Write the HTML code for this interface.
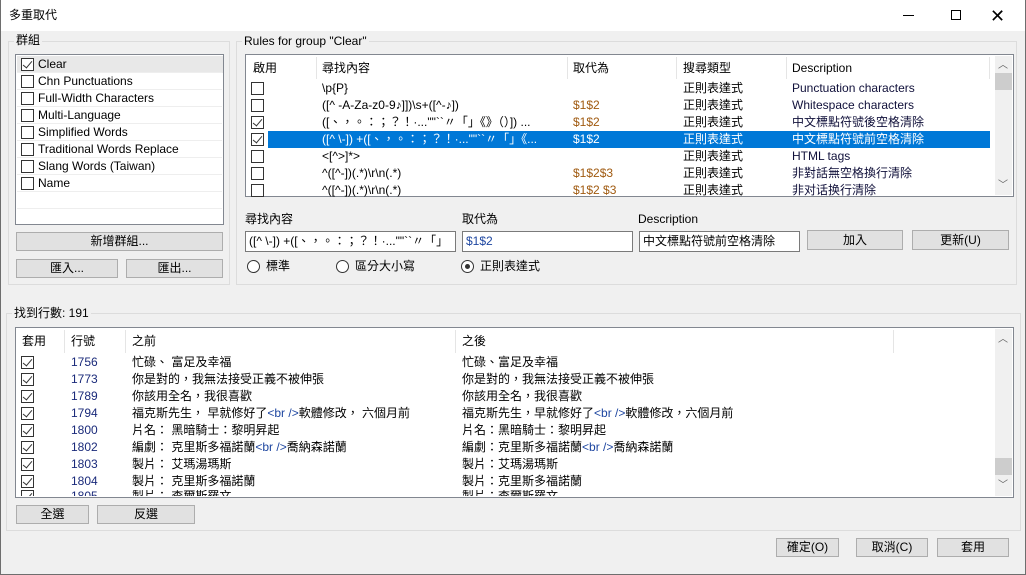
<!DOCTYPE html>
<html><head><meta charset="utf-8"><style>
*{box-sizing:border-box;margin:0;padding:0}
body{width:1026px;height:575px;overflow:hidden;background:#f0f0f0;font-family:"Liberation Sans","Noto Sans CJK TC",sans-serif;font-size:12px;color:#000;position:relative;line-height:15px}
.a{position:absolute;white-space:nowrap;line-height:15px;height:15px}
.win{position:absolute;left:0;top:0;width:1026px;height:575px;border:1px solid #6e6e6e;border-top:none}
.title{position:absolute;left:0;top:0;width:1026px;height:31px;background:#fff}
.gb{position:absolute;border:1px solid #dcdcdc}
.gl{position:absolute;background:#f0f0f0;padding:0 2px;line-height:14px}
.lb{position:absolute;background:#fff;border:1px solid #828790;overflow:hidden}
.btn{position:absolute;background:#e1e1e1;border:1px solid #adadad;text-align:center;line-height:17px}
.cb{position:absolute;width:13px;height:13px;border:1px solid #333;background:#fff}
.cb.c::after{content:"";position:absolute;left:3px;top:0px;width:4px;height:8px;border:solid #333;border-width:0 1.5px 1.5px 0;transform:rotate(40deg)}
.inp{position:absolute;background:#fff;border:1px solid #7a7a7a;height:21px;line-height:19px;padding-left:3px;overflow:hidden}
.rad{position:absolute;width:13px;height:13px;border:1px solid #333;border-radius:50%;background:#fff}
.rad.on::after{content:"";position:absolute;left:3px;top:3px;width:5px;height:5px;border-radius:50%;background:#333}
.sep{position:absolute;width:1px;background:#e5e5e5}
.num{color:#1a2a7a}.rep{color:#a05a10}.ds{color:#10103a}.tag{color:#1e46a0}
.sb{position:absolute;background:#f0f0f0}
</style></head><body>
<div class="title"></div>
<div class="a" style="left:9px;top:8px;font-size:12px">多重取代</div>
<div class="a" style="left:903px;top:15px;width:11px;height:1px;background:#000"></div>
<div class="a" style="left:951px;top:10px;width:10px;height:10px;border:1px solid #000"></div>
<div class="a" style="left:990px;top:4px;font-size:18px;line-height:24px;height:24px;font-weight:300">✕</div>

<!-- groups -->
<div class="gb" style="left:8px;top:41px;width:222px;height:244px"></div>
<div class="gl" style="left:14px;top:33px">群組</div>
<div class="lb" style="left:15px;top:54px;width:209px;height:171px">
<div class="a" style="left:1px;top:1px;width:206px;height:17px;background:#e8e8e8"></div>
</div>
<div id="g"></div>
<div class="btn" style="left:16px;top:232px;width:207px;height:19px">新增群組...</div>
<div class="btn" style="left:16px;top:259px;width:102px;height:19px">匯入...</div>
<div class="btn" style="left:126px;top:259px;width:97px;height:19px">匯出...</div>

<!-- rules -->
<div class="gb" style="left:236px;top:41px;width:781px;height:244px"></div>
<div class="gl" style="left:242px;top:34px">Rules for group "Clear"</div>
<div class="lb" style="left:245px;top:54px;width:769px;height:143px"></div>
<div class="sep" style="left:316px;top:57px;height:22px"></div>
<div class="sep" style="left:567px;top:57px;height:22px"></div>
<div class="sep" style="left:676px;top:57px;height:22px"></div>
<div class="sep" style="left:786px;top:57px;height:22px"></div>
<div class="sep" style="left:989px;top:57px;height:22px"></div>
<div class="a" style="left:253px;top:61px">啟用</div>
<div class="a" style="left:322px;top:61px">尋找內容</div>
<div class="a" style="left:573px;top:61px">取代為</div>
<div class="a" style="left:683px;top:61px">搜尋類型</div>
<div class="a" style="left:792px;top:61px">Description</div>
<div class="sb" style="left:995px;top:56px;width:17px;height:139px"></div>
<div class="sb" style="left:995px;top:73px;width:17px;height:17px;background:#cdcdcd"></div>
<div class="a" style="left:998px;top:58px;font-size:10px;color:#606060">︿</div>
<div class="a" style="left:998px;top:178px;font-size:10px;color:#606060">﹀</div>
<div class="a" style="left:268px;top:131px;width:722px;height:17px;background:#0078d7"></div>
<div id="r"></div>

<div class="a" style="left:245px;top:212px">尋找內容</div>
<div class="a" style="left:462px;top:212px">取代為</div>
<div class="a" style="left:638px;top:212px">Description</div>
<div class="inp" style="left:245px;top:231px;width:211px">([^ \-]) +([、，。：；？！·...""``〃「」《》</div>
<div class="inp" style="left:462px;top:231px;width:171px;color:#1e46a0">$1$2</div>
<div class="inp" style="left:639px;top:231px;width:161px">中文標點符號前空格清除</div>
<div class="btn" style="left:807px;top:230px;width:96px;height:20px;line-height:18px">加入</div>
<div class="btn" style="left:912px;top:230px;width:97px;height:20px;line-height:18px">更新(U)</div>
<div class="rad" style="left:247px;top:260px"></div><div class="a" style="left:266px;top:259px">標準</div>
<div class="rad" style="left:336px;top:260px"></div><div class="a" style="left:355px;top:259px">區分大小寫</div>
<div class="rad on" style="left:461px;top:260px"></div><div class="a" style="left:480px;top:259px">正則表達式</div>

<!-- found -->
<div class="gb" style="left:6px;top:313px;width:1015px;height:218px"></div>
<div class="gl" style="left:12px;top:306px">找到行數: 191</div>
<div class="lb" style="left:15px;top:327px;width:999px;height:171px"></div>
<div class="sep" style="left:64px;top:330px;height:23px"></div>
<div class="sep" style="left:125px;top:330px;height:23px"></div>
<div class="sep" style="left:455px;top:330px;height:23px"></div>
<div class="sep" style="left:893px;top:330px;height:23px"></div>
<div class="a" style="left:22px;top:334px">套用</div>
<div class="a" style="left:71px;top:334px">行號</div>
<div class="a" style="left:132px;top:334px">之前</div>
<div class="a" style="left:462px;top:334px">之後</div>
<div class="sb" style="left:995px;top:329px;width:17px;height:167px"></div>
<div class="sb" style="left:995px;top:458px;width:17px;height:17px;background:#cdcdcd"></div>
<div class="a" style="left:998px;top:332px;font-size:10px;color:#606060">︿</div>
<div class="a" style="left:998px;top:478px;font-size:10px;color:#606060">﹀</div>
<div id="f"></div>
<div class="btn" style="left:16px;top:505px;width:73px;height:19px">全選</div>
<div class="btn" style="left:97px;top:505px;width:98px;height:19px">反選</div>

<div class="btn" style="left:776px;top:538px;width:63px;height:19px">確定(O)</div>
<div class="btn" style="left:856px;top:538px;width:72px;height:19px">取消(C)</div>
<div class="btn" style="left:937px;top:538px;width:72px;height:19px">套用</div>
<div class="win"></div>
<script>
var g=["Clear","Chn Punctuations","Full-Width Characters","Multi-Language","Simplified Words","Traditional Words Replace","Slang Words (Taiwan)","Name"],h="";
g.forEach(function(t,i){var y=56+i*17;h+='<div class="cb'+(i==0?' c':'')+'" style="left:21px;top:'+(y+2)+'px"></div><div class="a" style="left:38px;top:'+(y+1)+'px">'+t+'</div>';if(i>0)h+='<div class="a" style="left:17px;top:'+(y-1)+'px;width:205px;height:1px;background:#eee"></div>';});
h+='<div class="a" style="left:17px;top:191px;width:205px;height:1px;background:#eee"></div><div class="a" style="left:17px;top:208px;width:205px;height:1px;background:#eee"></div>';
document.getElementById('g').innerHTML=h;
var r=[[0,"\\p{P}","","Punctuation characters"],[0,"([^ -A-Za-z0-9♪]])\\s+([^-♪])","$1$2","Whitespace characters"],[1,"([、，。：；？！·...\"\"``〃「」《》（）]) ...","$1$2","中文標點符號後空格清除"],[1,"([^ \\-]) +([、，。：；？！·...\"\"``〃「」《...","$1$2","中文標點符號前空格清除"],[0,"<[^>]*>","","HTML tags"],[0,"^([^-])(.*)\\r\\n(.*)","$1$2$3","非對話無空格換行清除"],[0,"^([^-])(.*)\\r\\n(.*)","$1$2 $3","非对话换行清除"]];
h="";r.forEach(function(x,i){var y=80+i*17,s=i==3,c=s?'color:#fff;':'';h+='<div class="cb'+(x[0]?' c':'')+'" style="left:251px;top:'+(y+2)+'px"></div><div class="a" style="'+c+'left:322px;top:'+(y+1)+'px;width:240px;overflow:hidden">'+x[1].replace(/</g,'&lt;')+'</div><div class="a '+(s?'':'rep')+'" style="'+c+'left:573px;top:'+(y+1)+'px">'+x[2]+'</div><div class="a" style="'+c+'left:683px;top:'+(y+1)+'px">正則表達式</div><div class="a '+(s?'':'ds')+'" style="'+c+'left:792px;top:'+(y+1)+'px">'+x[3]+'</div>';});
document.getElementById('r').innerHTML=h;
var T='<span class="tag">&lt;br /&gt;</span>';
var f=[["1756","忙碌、 富足及幸福","忙碌、富足及幸福"],["1773","你是對的，我無法接受正義不被伸張","你是對的，我無法接受正義不被伸張"],["1789","你該用全名，我很喜歡","你該用全名，我很喜歡"],["1794","福克斯先生， 早就修好了"+T+"軟體修改， 六個月前","福克斯先生，早就修好了"+T+"軟體修改，六個月前"],["1800","片名： 黑暗騎士：黎明昇起","片名：黑暗騎士：黎明昇起"],["1802","編劇： 克里斯多福諾蘭"+T+"喬納森諾蘭","編劇：克里斯多福諾蘭"+T+"喬納森諾蘭"],["1803","製片： 艾瑪湯瑪斯","製片：艾瑪湯瑪斯"],["1804","製片： 克里斯多福諾蘭","製片：克里斯多福諾蘭"]];
h="";f.forEach(function(x,i){var y=354+i*17;h+='<div class="cb c" style="left:21px;top:'+(y+2)+'px"></div><div class="a num" style="left:71px;top:'+(y+1)+'px">'+x[0]+'</div><div class="a" style="left:132px;top:'+(y+1)+'px">'+x[1]+'</div><div class="a" style="left:462px;top:'+(y+1)+'px">'+x[2]+'</div>';});
h+='<div class="a" style="left:16px;top:490px;width:978px;height:6px;overflow:hidden"><div class="cb c" style="left:5px;top:0"></div><div class="a num" style="left:55px;top:-1px">1805</div><div class="a" style="left:116px;top:-1px">製片： 查爾斯羅文</div><div class="a" style="left:446px;top:-1px">製片：查爾斯羅文</div></div>';
document.getElementById('f').innerHTML=h;
</script>
</body></html>
